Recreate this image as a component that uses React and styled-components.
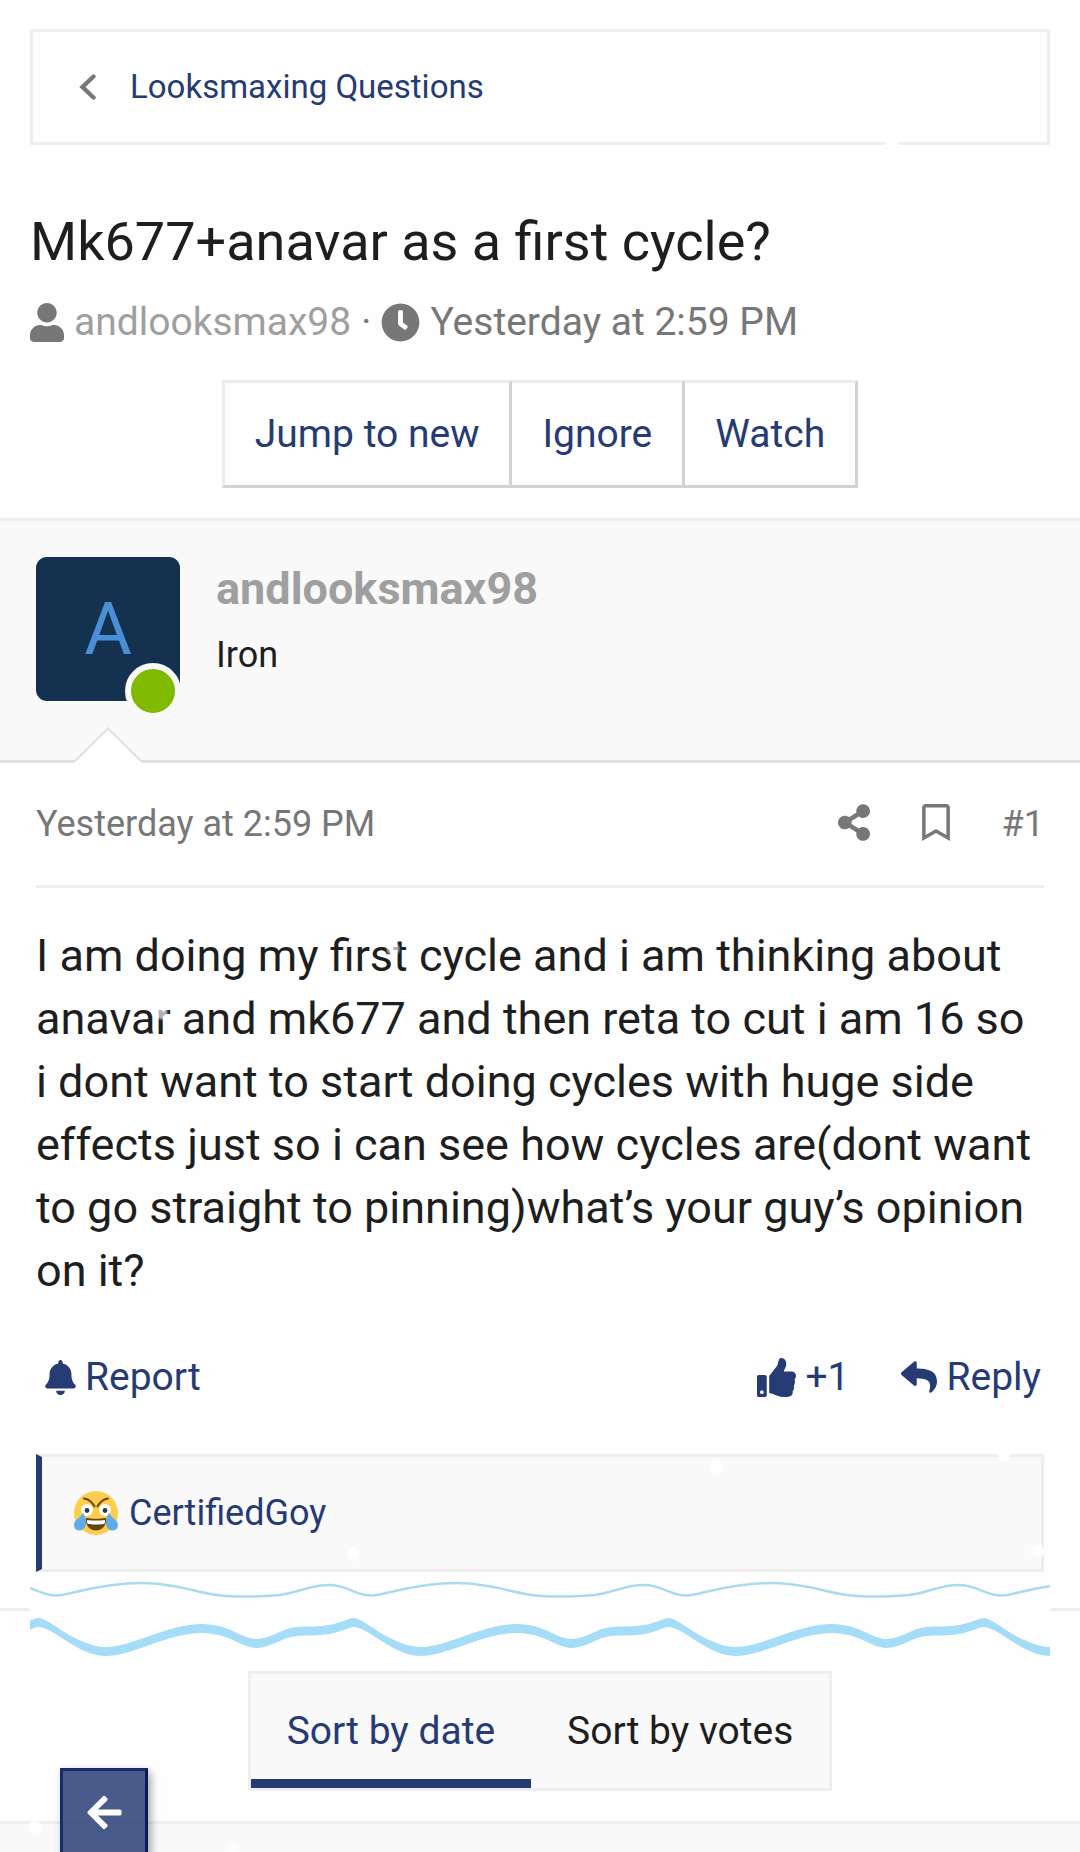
import { useState } from "react";
import styled, { createGlobalStyle } from "styled-components";
import {
  FaArrowLeft,
  FaBell,
  FaClock,
  FaRegBookmark,
  FaReply,
  FaShareAlt,
  FaThumbsUp,
  FaUser,
} from "react-icons/fa";

const navy = "#263b73";
const line = "#eeeeee";
const muted = "#777777";

const GlobalStyle = createGlobalStyle`
  * {
    box-sizing: border-box;
  }
  body {
    margin: 0;
    background: #fefefe;
    color: #1e1e1e;
    font-family: Roboto, "Liberation Sans", sans-serif;
    font-size: 39px;
    line-height: 54px;
  }
  a {
    color: ${navy};
    text-decoration: none;
  }
  button {
    font: inherit;
    cursor: pointer;
  }
  svg {
    display: block;
    flex: none;
  }
`;

const Page = styled.div`
  position: relative;
  display: flex;
  flex-direction: column;
  min-height: 100vh;
  overflow: hidden;
`;

// the glyphs are narrower than their height, so the width is set apart
const Icon = styled.span`
  flex: none;
  display: block;
  width: ${({ $width }) => $width}px;
  svg {
    width: 100%;
  }
`;

const PageHeader = styled.header`
  padding: 29px 30px 30px;
`;

const Breadcrumb = styled.nav`
  display: flex;
  align-items: center;
  gap: 34px;
  height: 116px;
  padding: 0 46px;
  border: 3px solid ${line};
  color: ${muted};
  font-size: 33px;
`;

const ThreadTitle = styled.h1`
  margin: 65px 0 21px;
  font-size: 54px;
  font-weight: 400;
  line-height: 64px;
`;

const ThreadInfo = styled.div`
  display: flex;
  align-items: center;
  gap: 10px;
  margin-bottom: 31px;
  color: ${muted};
`;

const InfoLink = styled.a`
  color: ${({ $light }) => ($light ? "#9f9f9f" : muted)};
`;

const ButtonGroup = styled.div`
  display: flex;
  justify-content: center;
`;

const GroupButton = styled.button`
  height: 108px;
  padding: 0 30px;
  background: #fefefe;
  color: ${navy};
  border: solid;
  border-width: 3px 3px 3px 0;
  border-color: #ebebeb #d2d2d2 #d2d2d2 #ebebeb;
  &:first-child {
    border-left-width: 3px;
  }
`;

const Post = styled.article`
  border-top: 3px solid ${line};
  border-bottom: 3px solid ${line};
`;

const UserCell = styled.div`
  position: relative;
  display: flex;
  gap: 36px;
  padding: 36px 36px 59px;
  background: #f9f9f9;
  border-bottom: 3px solid #e0e0e0;
`;

const Avatar = styled.a`
  position: relative;
  display: flex;
  align-items: center;
  justify-content: center;
  width: 144px;
  height: 144px;
  border-radius: 11px;
  background: #143250;
  color: #4a8fd6;
  font-size: 73px;
`;

const OnlineDot = styled.span`
  position: absolute;
  right: -1px;
  bottom: -18px;
  width: 56px;
  height: 56px;
  border: 6px solid #f9f9f9;
  border-radius: 50%;
  background: #7fb900;
`;

const CellArrow = styled.svg`
  position: absolute;
  left: 74px;
  bottom: -3px;
`;

const UserName = styled.h2`
  margin: 0 0 10px;
  color: #9f9f9f;
  font-size: 45px;
  font-weight: 700;
  line-height: 63px;
`;

const UserTitle = styled.div`
  font-size: 36px;
  line-height: 50px;
`;

const PostMain = styled.div`
  padding: 0 36px 36px;
`;

const PostMeta = styled.header`
  display: flex;
  align-items: center;
  justify-content: space-between;
  padding: 36px 0;
  border-bottom: 3px solid ${line};
  color: ${muted};
  font-size: 36px;
  line-height: 50px;
`;

const MetaActions = styled.div`
  display: flex;
  align-items: center;
  gap: 52px;
  a {
    color: ${muted};
  }
  svg {
    margin-bottom: 3px;
  }
`;

const PostBody = styled.p`
  margin: 36px 0 48px;
  font-size: 45px;
  line-height: 63px;
`;

const PostActions = styled.footer`
  display: flex;
  justify-content: space-between;
  padding: 0 3px 0 9px;
  margin-bottom: 50px;
`;

const ActionSet = styled.div`
  display: flex;
  gap: 52px;
`;

const ActionLink = styled.a`
  display: flex;
  align-items: center;
  gap: 9px;
`;

const ReactionBar = styled.div`
  display: flex;
  align-items: center;
  gap: 11px;
  height: 118px;
  padding: 0 32px;
  border: 3px solid ${line};
  border-left: 6px solid ${navy};
  background: #f9f9f9;
  font-size: 36px;
`;

const WaveStrip = styled.div`
  position: relative;
  height: 84px;
  margin: -33px 30px 9px;
  background: #fefefe;
`;

const Tabs = styled.div`
  display: flex;
  align-self: center;
  margin-bottom: 30px;
  border: 3px solid ${line};
  background: #f9f9f9;
`;

const Tab = styled.button`
  height: 114px;
  padding: 9px 36px 0;
  border: 0;
  border-bottom: 9px solid ${({ $active }) => ($active ? navy : "transparent")};
  background: none;
  color: ${({ $active }) => ($active ? navy : "#1e1e1e")};
`;

const NextPost = styled.div`
  flex: 1;
  min-height: 31px;
  border-top: 3px solid ${line};
  background: #f9f9f9;
`;

const BackButton = styled.button`
  position: fixed;
  left: 60px;
  bottom: -4px;
  display: flex;
  align-items: center;
  justify-content: center;
  width: 88px;
  height: 88px;
  padding: 0;
  border: 3px solid;
  border-color: #162c6b #0b1c50 #0b1c50 #162c6b;
  background: rgba(38, 59, 115, 0.84);
  background-clip: padding-box;
  color: #fff;
  box-shadow: 3px 4px 8px rgba(0, 0, 0, 0.35);
`;

const Snowflake = styled.i`
  position: absolute;
  width: 16px;
  height: 16px;
  border-radius: 50%;
  background: radial-gradient(#fff 40%, rgba(255, 255, 255, 0) 70%);
  opacity: ${({ $faint }) => ($faint ? 0.65 : 1)};
  pointer-events: none;
`;

const snow = [
  { x: 884, y: 134 },
  { x: 385, y: 941, faint: true },
  { x: 153, y: 1005, faint: true },
  { x: 709, y: 1459 },
  { x: 996, y: 1448 },
  { x: 1030, y: 1543 },
  { x: 345, y: 1546 },
  { x: 27, y: 1819 },
  { x: 225, y: 1840, faint: true },
];

const LaughingFace = () => (
  <svg width="44" height="44" viewBox="0 0 44 44" aria-hidden="true">
    <circle cx="22" cy="22" r="22" fill="#ffcc4d" />
    <circle cx="13" cy="19" r="6" fill="#fff" />
    <circle cx="31" cy="19" r="6" fill="#fff" />
    <circle cx="13" cy="19.5" r="2.4" fill="#2d3a48" />
    <circle cx="31" cy="19.5" r="2.4" fill="#2d3a48" />
    <path
      d="M10 7.5c5 .5 8 3.5 10.5 8M34 7.5c-5 .5-8 3.5-10.5 8"
      fill="none"
      stroke="#664500"
      strokeWidth="1.8"
      strokeLinecap="round"
    />
    <path
      d="M12 27c6 1 14 1 20 0 1 6-3 12.5-10 12.5S11 33 12 27z"
      fill="#664500"
    />
    <path d="M13 29c6 .8 12 .8 18 0v3c-.5 2-17.5 2-18 0z" fill="#fff" />
    <path
      d="M9 22c2.5 4 3.5 7 3 11-.5 4-3.5 6.5-6.500 6.500-4 0-6-3-5.300-7C.8 29 6 27 9 22zM35 22c-2.500 4-3.500 7-3 11 .5 4 3.500 6.500 6.500 6.500 4 0 6-3 5.300-7C43.200 29 38 27 35 22z"
      fill="#5dadec"
    />
  </svg>
);

const Waves = () => (
  <svg width="100%" height="84" aria-hidden="true">
    <defs>
      <pattern id="waves" x="9" width="315" height="84" patternUnits="userSpaceOnUse">
        <path
          d="M0 13.5C8 17 13 17.5 18 17.5 30 17 60 5 103 5c32 0 57 10 75 12 12 1.5 37 2 62 0 18-2 30-10 50-10 12 0 18 4 25 6.5"
          fill="none"
          stroke="#abdaef"
          strokeWidth="2.5"
        />
        <path
          d="M0 40C8 41 22 53 34 59C46 65 56 69 67 69C92 69 130 46 163 46C190 46 203 61 217 61C232 61 243 50 258 49C268 48 280 49 290 47C302 45 310 40 315 40V49C310 49 302 54 290 56C280 58 268 57 258 58C243 59 232 70 217 70C203 70 190 55 163 55C130 55 92 78 67 78C56 78 46 74 34 67C22 60 10 50 0 49Z"
          fill="#a5dcf7"
        />
      </pattern>
    </defs>
    <rect width="100%" height="84" fill="url(#waves)" />
  </svg>
);

const App = () => {
  const [sort, setSort] = useState("date");
  return (
    <Page>
      <GlobalStyle />
      <PageHeader>
        <Breadcrumb>
          <svg width="17" height="26" viewBox="0 0 17 26" aria-hidden="true">
            <path
              d="M14.5 2.5 3.5 13l11 10.5"
              fill="none"
              stroke={muted}
              strokeWidth="4.4"
              strokeLinecap="round"
            />
          </svg>
          <a href="#questions">Looksmaxing Questions</a>
        </Breadcrumb>
        <ThreadTitle>Mk677+anavar as a first cycle?</ThreadTitle>
        <ThreadInfo>
          <Icon $width={34}>
            <FaUser size={39} />
          </Icon>
          <InfoLink href="#user" $light>
            andlooksmax98
          </InfoLink>
          <span>·</span>
          <Icon $width={39}>
            <FaClock size={39} />
          </Icon>
          <InfoLink href="#post-1">Yesterday at 2:59 PM</InfoLink>
        </ThreadInfo>
        <ButtonGroup>
          <GroupButton>Jump to new</GroupButton>
          <GroupButton>Ignore</GroupButton>
          <GroupButton>Watch</GroupButton>
        </ButtonGroup>
      </PageHeader>

      <Post id="post-1">
        <UserCell>
          <Avatar href="#user">
            A
            <OnlineDot />
          </Avatar>
          <div>
            <UserName>andlooksmax98</UserName>
            <UserTitle>Iron</UserTitle>
          </div>
          <CellArrow width="68" height="36" viewBox="0 0 68 36">
            <path d="M0 36 34 2l34 34z" fill="#fefefe" />
            <path d="M0 35 34 1.5 68 35" fill="none" stroke="#e0e0e0" strokeWidth="2" />
          </CellArrow>
        </UserCell>
        <PostMain>
          <PostMeta>
            <time>Yesterday at 2:59 PM</time>
            <MetaActions>
              <a href="#share" aria-label="Share">
                <Icon $width={32}>
                  <FaShareAlt size={37} />
                </Icon>
              </a>
              <a href="#bookmark" aria-label="Bookmark">
                <Icon $width={28}>
                  <FaRegBookmark size={37} />
                </Icon>
              </a>
              <a href="#post-1">#1</a>
            </MetaActions>
          </PostMeta>
          <PostBody>
            I am doing my first cycle and i am thinking about anavar and mk677
            and then reta to cut i am 16 so i dont want to start doing cycles
            with huge side effects just so i can see how cycles are(dont want to
            go straight to pinning)what’s your guy’s opinion on it?
          </PostBody>
          <PostActions>
            <ActionLink href="#report">
              <Icon $width={31}>
                <FaBell size={35} />
              </Icon>
              Report
            </ActionLink>
            <ActionSet>
              <ActionLink href="#like">
                <Icon $width={39}>
                  <FaThumbsUp size={39} />
                </Icon>
                +1
              </ActionLink>
              <ActionLink href="#reply">
                <Icon $width={36}>
                  <FaReply size={36} />
                </Icon>
                Reply
              </ActionLink>
            </ActionSet>
          </PostActions>
          <ReactionBar>
            <LaughingFace />
            <a href="#reactions">CertifiedGoy</a>
          </ReactionBar>
        </PostMain>
      </Post>

      <WaveStrip>
        <Waves />
      </WaveStrip>

      <Tabs role="tablist">
        <Tab
          role="tab"
          aria-selected={sort === "date"}
          $active={sort === "date"}
          onClick={() => setSort("date")}
        >
          Sort by date
        </Tab>
        <Tab
          role="tab"
          aria-selected={sort === "votes"}
          $active={sort === "votes"}
          onClick={() => setSort("votes")}
        >
          Sort by votes
        </Tab>
      </Tabs>
      <NextPost />

      {snow.map(({ x, y, faint }) => (
        <Snowflake key={`${x}-${y}`} $faint={faint} style={{ left: x, top: y }} />
      ))}
      <BackButton aria-label="Back">
        <FaArrowLeft size={39} />
      </BackButton>
    </Page>
  );
};

export default App;
